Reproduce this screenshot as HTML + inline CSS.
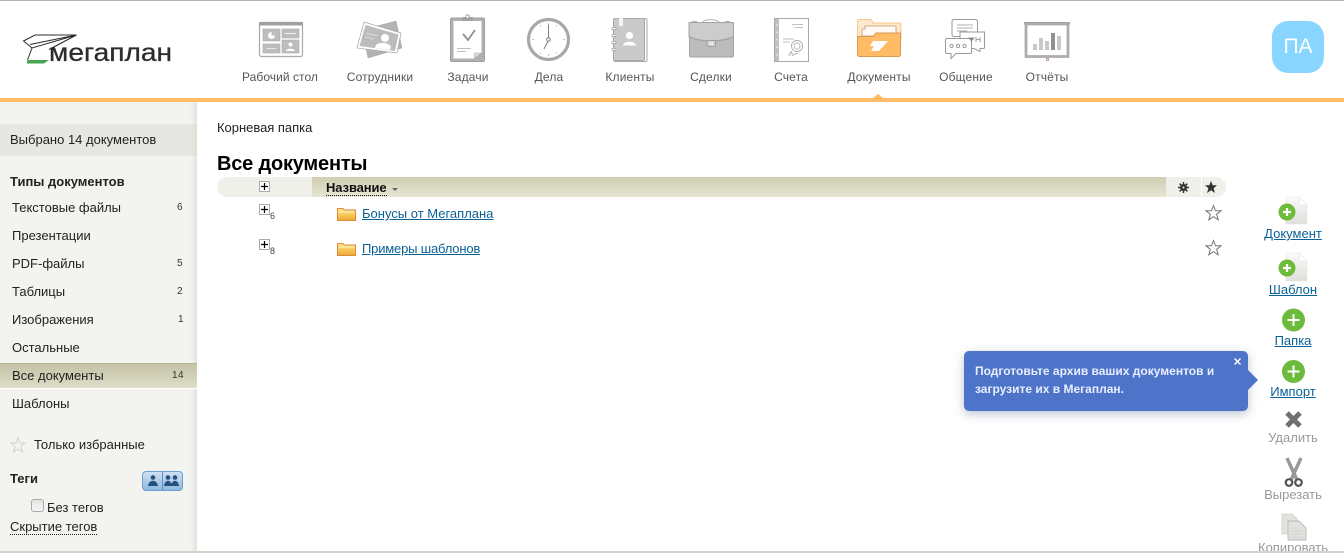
<!DOCTYPE html>
<html lang="ru"><head><meta charset="utf-8"><title>Мегаплан</title>
<style>
*{box-sizing:border-box}
html,body{margin:0;padding:0;width:1344px;height:553px;overflow:hidden;background:#fff;font-family:"Liberation Sans",sans-serif;font-size:13px;color:#222}
.a{position:absolute;white-space:nowrap;line-height:16px}
.n{font-size:12px;color:#555;transform:translateX(-50%);letter-spacing:.15px}
#side{position:absolute;left:0;top:102px;width:197px;height:449px;background:#f3f3ef;box-shadow:inset -6px 0 6px -4px #dedeD8}
.c{font-size:10px;color:#333}
a,.l{color:#0a6196;text-decoration:underline}
.g{color:#999}
.r{transform:translateX(-50%);font-size:13px}
</style></head><body>
<div class="a" style="left:0;top:0;width:1344px;height:1px;background:#b4b4b4"></div>

<svg class="a" style="left:0;top:0" width="1344" height="102" viewBox="0 0 1344 102" fill="none">
<rect y="98" width="1344" height="4" fill="#ffbb66"/>
<path d="M873 98l5-4 5 4z" fill="#ffbb66"/>
<!-- logo -->
<path d="M76.500 35H35L23.500 41 32 48 76.500 35 49 49.500M76.500 35 30 44.500M32 48 27.500 60" stroke="#2c2c2c" stroke-width="1"/>
<path d="M27.500 60H49L44 63.500H26.500z" fill="#45a64f"/>
<text x="49" y="61" font-size="25" font-family="Liberation Sans" fill="#2c2c2c" stroke="#2c2c2c" stroke-width=".3" textLength="123" lengthAdjust="spacingAndGlyphs">мегаплан</text>
<!-- desktop -->
<rect x="259.500" y="22.500" width="43" height="34" rx="2" fill="#fff" stroke="#aaa" stroke-width="1.200"/>
<rect x="259" y="22" width="44" height="3.500" fill="#a0a0a0"/>
<rect x="263" y="29" width="17" height="12" fill="#bdbdbd" stroke="#aaa" stroke-width=".6"/>
<path d="M271.500 32a3.500 3.500 0 1 0 3.500 3.500h-3.500z" fill="#fff"/>
<rect x="282" y="29" width="17" height="9" fill="#bdbdbd" stroke="#aaa" stroke-width=".6"/>
<path d="M285 33.500h11" stroke="#fff" stroke-width=".8"/>
<rect x="263" y="44" width="17" height="9" fill="#bdbdbd" stroke="#aaa" stroke-width=".6"/>
<path d="M267 48.500h9" stroke="#fff" stroke-dasharray="1 .6"/>
<rect x="282" y="40" width="17" height="13" fill="#bdbdbd" stroke="#aaa" stroke-width=".6"/>
<circle cx="290.500" cy="44.500" r="2" fill="#fff"/><path d="M286 51c0-3 9-3 9 0z" fill="#fff"/>
<!-- employees -->
<path d="M362 30 396 21 402 48 368 58z" fill="#b3b3b3" stroke="#a3ab9c" stroke-width=".5"/>
<path d="M364 22 401 33 397 53 357 48z" fill="#fff" stroke="#a3ab9c" stroke-width=".7"/>
<path d="M365.500 25 398.500 34.500 395 51 359.500 46z" fill="#bcbcbc"/>
<circle cx="385" cy="38" r="4" fill="#fff"/><path d="M375 47c2-6 14-5 16 0l-1 3-15-2z" fill="#fff"/>
<path d="M366 33 378 36M365 37 374 39" stroke="#e4e4e4" stroke-width=".8"/>
<!-- tasks -->
<rect x="450.500" y="18" width="34" height="43.500" rx="1.500" fill="#b0b0b0" stroke="#a0a0a0"/>
<path d="M453.500 21H481.500V53L474.500 58.500H453.500z" fill="#fff"/>
<path d="M474.500 58.500V53H481.500z" fill="#ddd" stroke="#aaa" stroke-width=".6"/>
<rect x="462" y="17" width="11" height="4" rx="1" fill="#a0a0a0"/><circle cx="467.500" cy="16.500" r="1.800" fill="#fff" stroke="#a0a0a0"/>
<path d="M463 34 468 40 475 30" stroke="#8f8f8f" stroke-width="1.800"/>
<path d="M457 48.500h14M457 51.500h9" stroke="#c0c0c0"/>
<!-- clock -->
<circle cx="548.500" cy="39.500" r="20" fill="#fff" stroke="#a8a8a8" stroke-width="3.200"/>
<path d="M548.500 25V38M547.800 41.500 544 49" stroke="#777" stroke-width=".9"/>
<circle cx="548.500" cy="39.500" r="1.800" stroke="#777"/>
<path d="M548.500 23v2M548.500 54v2M532 39.500h2M563 39.500h2M540 25l.7 1.300M557 25l-.7 1.300M540 54l.7-1.300M557 54l-.7-1.300" stroke="#aaa" stroke-width=".7"/>
<!-- clients -->
<rect x="614" y="18.500" width="33" height="43" rx="1.500" fill="#fff" stroke="#a8a8a8"/>
<rect x="613.500" y="18.500" width="31" height="42" rx="1.500" fill="#cacaca" stroke="#a8a8a8"/>
<path d="M619 18h4v9l-2-1.500-2 1.500z" fill="#f4f4f4"/>
<g fill="#fff" stroke="#a0a0a0" stroke-width=".8"><rect x="612" y="27.500" width="4" height="2.200" rx="1"/><rect x="612" y="34.500" width="4" height="2.200" rx="1"/><rect x="612" y="41.500" width="4" height="2.200" rx="1"/><rect x="612" y="48.500" width="4" height="2.200" rx="1"/></g>
<circle cx="629.500" cy="35.500" r="3.600" fill="#fff"/><path d="M623 45.500c.5-5 12.500-5 13 0z" fill="#fff"/>
<!-- deals -->
<path d="M703 22c1-3 14-3 16 0M692 22c1-1 4-1 5 0M725 22c1-1 4-1 5 0" stroke="#b0b0b0"/>
<path d="M689 22.500H733.500V37C720 42 702 42 689 37z" fill="#cccccc" stroke="#a3a3a3"/>
<path d="M689.500 37C702 42.500 720 42.500 733.500 37V55.500A1.500 1.500 0 0 1 732 57H691A1.500 1.500 0 0 1 689.500 55.500z" fill="#bcbcbc" stroke="#a3a3a3"/>
<rect x="707" y="40.500" width="8.500" height="6" rx="1.500" fill="#d2d2d2" stroke="#a0a0a0"/>
<path d="M710 42v3M712.500 42v3M710 43.500h2.500" stroke="#fff" stroke-width=".7"/>
<!-- invoices -->
<rect x="774.500" y="18.500" width="34" height="43" fill="#fff" stroke="#a8a8a8"/>
<rect x="775" y="19" width="4" height="42" fill="#c0c0c0"/>
<path d="M777 24v32" stroke="#fff" stroke-dasharray="1.500 6"/>
<path d="M792 24.500h11M795 27.500h8M783 39h11M783 42h7" stroke="#aaa" stroke-width=".8"/>
<circle cx="797" cy="46" r="5.500" stroke="#aaa" stroke-width=".9"/><circle cx="797" cy="46" r="3" stroke="#aaa" stroke-width=".8"/>
<path d="M789 56c2-6 3-5 3-2s2 0 3 0 2 0 3-1" stroke="#999" stroke-width=".8"/>
<!-- documents -->
<path d="M857.500 21a1.500 1.500 0 0 1 1.500-1.500H871L873 23H899A2 2 0 0 1 901 25V40H857.500z" fill="#fde9cf" stroke="#f8c889"/>
<path d="M862 36V29H865V26H896V36z" fill="#fffaf3" stroke="#c49a63" stroke-width=".8"/>
<path d="M857.500 36.500V54.500A2 2 0 0 0 859.500 56.500H898.500A2 2 0 0 0 900.500 54.500V33H876L873 36.500z" fill="#ffbb66" stroke="#d69b50"/>
<path d="M873 41H888L879 51H871L874 46H870z" fill="#fff"/>
<!-- communication -->
<g fill="#fff" stroke="#999a9a" stroke-width="1">
<path d="M954 19.500H975.500A2 2 0 0 1 977.500 21.500V34.500A2 2 0 0 1 975.500 36.500H954A2 2 0 0 1 952 34.500V21.500A2 2 0 0 1 954 19.500z"/>
<path d="M960 32H984.500V47.500A1 1 0 0 1 983.500 48.500H980V51.500L974 48.500H960z"/>
<path d="M947 38.500H970.500A1 1 0 0 1 971.500 39.500V52.500A1 1 0 0 1 970.500 53.500H956L951 58.500V53.500H947A1.500 1.500 0 0 1 945.500 52V40A1.500 1.500 0 0 1 947 38.500z"/>
<circle cx="951.500" cy="46" r="1.600"/><circle cx="958" cy="46" r="1.600"/><circle cx="964.500" cy="46" r="1.600"/>
</g>
<path d="M957 25h16M957 28h16M957 31h10" stroke="#999" stroke-width=".8"/>
<path d="M969 38h5l-2.500 3zM976 37v5M980 37v5M976 39.500h4" fill="#888" stroke="#888" stroke-width=".8"/>
<!-- reports -->
<rect x="1024" y="22" width="46" height="2.500" fill="#9b9b9b"/>
<rect x="1026" y="24" width="42" height="32.500" fill="#fff" stroke="#adadad" stroke-width="2.800"/>
<path d="M1033 44h4v6h-4zM1039 38h4v12h-4zM1045 41h4v9h-4zM1057 36h4v14h-4z" fill="#c8c8c8"/>
<path d="M1051 33h4v17h-4z" fill="#909090"/>
<circle cx="1047.500" cy="59.500" r="1.200" stroke="#b08a80" stroke-width=".8"/>
</svg>

<div class="a n" style="left:280px;top:69px;letter-spacing:.05px">Рабочий стол</div>
<div class="a n" style="left:380px;top:69px">Сотрудники</div>
<div class="a n" style="left:468px;top:69px">Задачи</div>
<div class="a n" style="left:549px;top:69px">Дела</div>
<div class="a n" style="left:630px;top:69px">Клиенты</div>
<div class="a n" style="left:711px;top:69px">Сделки</div>
<div class="a n" style="left:791px;top:69px">Счета</div>
<div class="a n" style="left:879px;top:69px">Документы</div>
<div class="a n" style="left:966px;top:69px">Общение</div>
<div class="a n" style="left:1047px;top:69px">Отчёты</div>

<div class="a" style="left:1272px;top:21px;width:52px;height:52px;border-radius:16px;background:#88d5ff;color:#fff;font-size:21px;line-height:52px;text-align:center">ПА</div>

<div id="side"></div>
<div class="a" style="left:0;top:124px;width:197px;height:32px;background:#e6e6e2;box-shadow:inset -6px 0 6px -4px #dcdcd6"></div>
<div class="a" style="left:10px;top:132px">Выбрано 14 документов</div>
<div class="a" style="left:10px;top:174px;font-weight:bold">Типы документов</div>
<div class="a" style="left:12px;top:200px">Текстовые файлы</div><div class="a c" style="left:177px;top:200px">6</div>
<div class="a" style="left:12px;top:228px">Презентации</div>
<div class="a" style="left:12px;top:256px">PDF-файлы</div><div class="a c" style="left:177px;top:256px">5</div>
<div class="a" style="left:12px;top:284px">Таблицы</div><div class="a c" style="left:177px;top:284px">2</div>
<div class="a" style="left:12px;top:312px">Изображения</div><div class="a c" style="left:178px;top:312px">1</div>
<div class="a" style="left:12px;top:340px">Остальные</div>
<div class="a" style="left:0;top:363px;width:197px;height:26px;background:linear-gradient(#c4c3a6,#deddc8);border-top:1px solid #b5b49a;border-bottom:1px solid #fff"></div>
<div class="a" style="left:12px;top:368px">Все документы</div><div class="a c" style="left:172px;top:368px;letter-spacing:.5px">14</div>
<div class="a" style="left:12px;top:396px">Шаблоны</div>
<svg class="a" style="left:10px;top:437px" width="16" height="16" viewBox="0 0 16 16"><path d="M8 1l2 5h5l-4 3.500 1.500 5.500L8 12l-4.500 3L5 9.500 1 6h5z" fill="none" stroke="#d2d2d2"/></svg>
<div class="a" style="left:34px;top:437px">Только избранные</div>
<div class="a" style="left:10px;top:471px;font-weight:bold">Теги</div>
<div class="a" style="left:142px;top:471px;width:41px;height:20px;border:1px solid #6f9fd0;border-radius:4px;background:linear-gradient(#cfe0f2,#8fb8e0)"></div>
<div class="a" style="left:162px;top:472px;width:1px;height:18px;background:#5f8fc0"></div>
<svg class="a" style="left:144px;top:473px" width="38" height="16" viewBox="0 0 38 16" fill="#23507d"><circle cx="9" cy="4.500" r="2.300"/><path d="M4 13C5 6 13 6 14 13z"/><circle cx="24" cy="4.500" r="2.300"/><circle cx="31" cy="4.500" r="2.300"/><path d="M20 13c1-7 7-7 8 0zM27 13c1-7 7-7 8 0z"/></svg>
<div class="a" style="left:31px;top:499px;width:13px;height:13px;border:1px solid #aaa;border-radius:3px;background:linear-gradient(#e4e4e4,#f4f4f4)"></div>
<div class="a" style="left:47px;top:500px">Без тегов</div>
<div class="a" style="left:10px;top:520px;border-bottom:1px dotted #222;line-height:14px;height:15px">Скрытие тегов</div>

<div class="a" style="left:217px;top:120px;font-size:13px;letter-spacing:-.02px">Корневая папка</div>
<div class="a" style="left:217px;top:153px;font-size:20px;font-weight:bold;color:#000;line-height:23px;letter-spacing:-.2px">Все документы</div>
<div class="a" style="left:217px;top:177px;width:1009px;height:20px;background:#f0f0ea;border-radius:10px"></div>
<div class="a" style="left:312px;top:177px;width:854px;height:20px;background:linear-gradient(#cfceb2,#e6e5d3)"></div>
<div class="a" style="left:1201px;top:177px;width:1px;height:20px;background:#fff"></div>
<div class="a" style="left:326px;top:181px;font-weight:bold;color:#111;border-bottom:1px dotted #111;line-height:14px;height:15px;letter-spacing:-.1px">Название</div>
<div class="a" style="left:392px;top:188px;width:0;height:0;border:3px solid transparent;border-top:3px solid #666"></div>
<svg class="a" style="left:1177px;top:181px" width="13" height="13" viewBox="0 0 13 13"><circle cx="6.500" cy="6.500" r="3.500" fill="#333"/><path d="M6.500 1v11M1 6.500h11M2.600 2.600l7.800 7.800M10.400 2.600l-7.800 7.800" stroke="#333" stroke-width="1.500"/><circle cx="6.500" cy="6.500" r="1" fill="#f0f0ea"/></svg>
<svg class="a" style="left:1204px;top:180px" width="14" height="14" viewBox="0 0 14 14"><path d="M7 1l1.700 4.300H13L9.600 8.200 11 13 7 10.200 3 13l1.400-4.800L1 5.300h4.300z" fill="#333"/></svg>

<svg class="a" style="left:259px;top:180px" width="20" height="80" viewBox="0 0 20 80" fill="none">
<g stroke="#aaa" fill="#fff"><rect x=".5" y="1.500" width="10" height="10"/><rect x=".5" y="24.500" width="10" height="10"/><rect x=".5" y="59.500" width="10" height="10"/></g>
<path d="M2 6.500h7M5.500 3v7M2 29.500h7M5.500 26v7M2 64.500h7M5.500 61v7" stroke="#000" stroke-width="1.200"/></svg>
<div class="a" style="left:270px;top:211px;font-size:9px;line-height:10px;color:#444">6</div>
<div class="a" style="left:270px;top:246px;font-size:9px;line-height:10px;color:#444">8</div>

<svg class="a" style="left:337px;top:207px" width="19" height="14" viewBox="0 0 19 14"><defs><linearGradient id="f" x1="0" y1="0" x2="0" y2="1"><stop offset="0" stop-color="#ffe88a"/><stop offset="1" stop-color="#f0a830"/></linearGradient></defs><path d="M.5 1.500H6L7.500 3H18.500V13.500H.5z" fill="url(#f)" stroke="#e08a3c"/><path d="M1.500 5H17.500" stroke="#fff3c4"/></svg>
<svg class="a" style="left:337px;top:242px" width="19" height="14" viewBox="0 0 19 14"><path d="M.5 1.500H6L7.500 3H18.500V13.500H.5z" fill="url(#f)" stroke="#e08a3c"/><path d="M1.500 5H17.500" stroke="#fff3c4"/></svg>
<div class="a l" style="left:362px;top:206px">Бонусы от Мегаплана</div>
<div class="a l" style="left:362px;top:241px;letter-spacing:-.18px">Примеры шаблонов</div>
<svg class="a" style="left:1205px;top:204px" width="17" height="17" viewBox="0 0 17 17"><path d="M8.500 1.500l2 5.300h5.500l-4.400 3.500 1.600 5.500-4.700-3.200-4.700 3.200 1.600-5.500L1 6.800h5.500z" fill="none" stroke="#777"/></svg>
<svg class="a" style="left:1205px;top:239px" width="17" height="17" viewBox="0 0 17 17"><path d="M8.500 1.500l2 5.300h5.500l-4.400 3.500 1.600 5.500-4.700-3.200-4.700 3.200 1.600-5.500L1 6.800h5.500z" fill="none" stroke="#777"/></svg>

<svg class="a" style="left:1270px;top:190px" width="60" height="360" viewBox="0 0 60 360" fill="none">
<defs><linearGradient id="p" x1="0" y1="0" x2="0" y2="1"><stop offset="0" stop-color="#fafaf8"/><stop offset="1" stop-color="#dfe0dc"/></linearGradient></defs>
<path d="M16 7H29L37 15V34H16z" fill="url(#p)" stroke="#e4e4e0" stroke-width=".6"/><path d="M29 7V15H37z" fill="#fff" stroke="#ddd" stroke-width=".5"/>
<circle cx="17" cy="22" r="8.500" fill="#6cbb3c"/><path d="M13 22h8M17 18v8" stroke="#fff" stroke-width="2.200"/>
<path d="M16 63H29L37 71V91H16z" fill="url(#p)" stroke="#e4e4e0" stroke-width=".6"/><path d="M29 63V71H37z" fill="#fff" stroke="#ddd" stroke-width=".5"/>
<circle cx="17" cy="78" r="8.500" fill="#6cbb3c"/><path d="M13 78h8M17 74v8" stroke="#fff" stroke-width="2.200"/>
<circle cx="23.500" cy="130" r="11.500" fill="#6cbb3c"/><path d="M17.500 130h12M23.500 124v12" stroke="#fff" stroke-width="2"/>
<circle cx="23.500" cy="181.500" r="11.500" fill="#6cbb3c"/><path d="M17.500 181.500h12M23.500 175.500v12" stroke="#fff" stroke-width="2"/>
<path d="M17 223 30 236M30 223 17 236" stroke="#707070" stroke-width="5"/>
<path d="M17 268 27 290M31 268 21 290" stroke="#999" stroke-width="3.500"/>
<circle cx="19" cy="292.500" r="3.300" stroke="#555" stroke-width="2.200"/><circle cx="28.500" cy="292.500" r="3.300" stroke="#555" stroke-width="2.200"/>
<path d="M12 324H22L27 329V344H12z" fill="#e2e3df" stroke="#c0c0bc" stroke-width=".6"/>
<path d="M18 331H29L36 338V350H18z" fill="#e2e3df" stroke="#a8a8a4" stroke-width=".7"/>
<path d="M20 338h8M20 341h13M20 344h13M20 347h13" stroke="#c4c4c0" stroke-width=".6"/>
</svg>
<div class="a l r" style="left:1293px;top:226px">Документ</div>
<div class="a l r" style="left:1293px;top:282px">Шаблон</div>
<div class="a l r" style="left:1293px;top:333px">Папка</div>
<div class="a l r" style="left:1293px;top:384px">Импорт</div>
<div class="a g r" style="left:1293px;top:430px">Удалить</div>
<div class="a g r" style="left:1293px;top:487px">Вырезать</div>
<div class="a g r" style="left:1293px;top:540px;height:11px;overflow:hidden">Копировать</div>
<div class="a" style="left:0;top:551px;width:1344px;height:2px;background:#d4d4cc"></div>

<div class="a" style="left:964px;top:351px;width:284px;height:60px;background:#4d74c9;border-radius:5px;box-shadow:0 3px 10px rgba(60,80,120,.35)"></div>
<div class="a" style="left:1248px;top:370px;width:0;height:0;border:10px solid transparent;border-left:10px solid #4d74c9;border-right:0"></div>
<div class="a" style="left:975px;top:362px;color:#e8eeff;font-size:12px;font-weight:bold;line-height:18px">Подготовьте архив ваших документов и<br>загрузите их в Мегаплан.</div>
<svg class="a" style="left:1233px;top:357px" width="9" height="9" viewBox="0 0 9 9"><path d="M1.500 1.500l6 6M7.500 1.500l-6 6" stroke="#fff" stroke-width="1.400"/></svg>
</body></html>
